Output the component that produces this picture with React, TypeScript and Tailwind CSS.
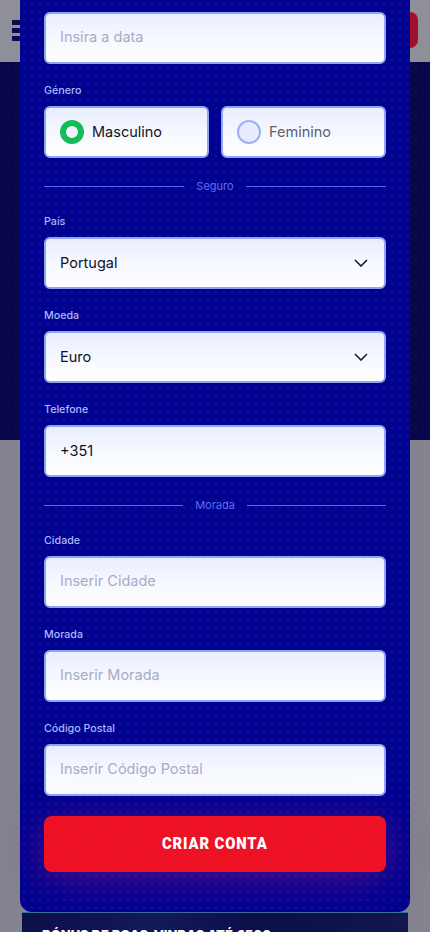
const font = "font-['Inter','Liberation_Sans',sans-serif]";
const inputBox =
  "flex h-[52px] w-full items-center rounded-md border-2 border-[#8ea4f5] bg-gradient-to-b from-[#e9eefe] via-[#f6f8ff] to-white px-[14px] text-[14.5px]";

function Label({ children }: { children: string }) {
  return <div className="mb-[7px] mt-[19px] h-4 text-[10.7px] font-medium leading-4 text-[#a9b7fb]">{children}</div>;
}

function Divider({ children }: { children: string }) {
  return (
    <div className="mb-px mt-5 flex h-4 items-center gap-3">
      <div className="h-px flex-1 bg-[#5a68f5]" />
      <span className="text-[11px] leading-4 text-[#5f6cf5]">{children}</span>
      <div className="h-px flex-1 bg-[#5a68f5]" />
    </div>
  );
}

function Placeholder({ children }: { children: string }) {
  return (
    <div className={inputBox}>
      <span className="-mt-[2px] text-[#a6acc6]">{children}</span>
    </div>
  );
}

function Select({ value }: { value: string }) {
  return (
    <div className={`${inputBox} justify-between`}>
      <span className="text-[#11131f]">{value}</span>
      <svg viewBox="0 0 14 8" className="mr-[2px] h-2 w-[14px]" fill="none" stroke="#1a1c2b" strokeWidth="1.6">
        <path d="M1 1l6 6 6-6" />
      </svg>
    </div>
  );
}

export default function App() {
  return (
    <div className={`relative h-[932px] w-[430px] overflow-hidden bg-[#83848f] ${font}`}>
      {/* page behind the dialog */}
      <div className="flex h-[62px] items-start justify-between bg-[#8f8f99] pl-3 pr-3 pt-3">
        <div className="mt-2 flex w-6 flex-col gap-[3px]">
          <div className="h-[5px] bg-[#0b0b4f]" />
          <div className="h-[5px] bg-[#0b0b4f]" />
          <div className="h-[5px] bg-[#0b0b4f]" />
        </div>
        <div className="h-9 w-20 rounded-lg bg-[#a20f2c]" />
      </div>
      <div className="h-[378px] bg-[#07074a] bg-[radial-gradient(#0a0a50_1px,transparent_1px)] bg-[length:6px_6px]" />
      <div className="mx-[22px] mt-[472px] h-5 overflow-hidden border-t border-[#3d6f98] bg-[linear-gradient(115deg,#0b0f4a_0%,#141a58_35%,#0b0f4a_60%,#12174f_100%)] px-5 pt-[12px] text-[13px] font-extrabold leading-5 text-white">
        BÓNUS DE BOAS-VINDAS ATÉ €500
      </div>

      {/* dialog */}
      <div className="absolute inset-x-5 top-0 flex h-[912px] flex-col rounded-b-xl bg-[#020290] bg-[radial-gradient(#0e1498_0.8px,transparent_1px),radial-gradient(#0a0f94_0.8px,transparent_1px)] bg-[length:8px_8px,11px_11px] px-6 pt-3">
        <Placeholder>Insira a data</Placeholder>

        <Label>Género</Label>
        <div className="grid grid-cols-2 gap-3">
          <div className={inputBox}>
            <span className="mr-2 h-6 w-6 rounded-full border-[6px] border-[#16bb5a] bg-[#eef1fe]" />
            <span className="text-[#11131f]">Masculino</span>
          </div>
          <div className={inputBox}>
            <span className="mr-2 h-6 w-6 rounded-full border-2 border-[#9db0f5] bg-[#e8edfe]" />
            <span className="text-[#5c5f70]">Feminino</span>
          </div>
        </div>

        <Divider>Seguro</Divider>
        <Label>País</Label>
        <Select value="Portugal" />
        <Label>Moeda</Label>
        <Select value="Euro" />
        <Label>Telefone</Label>
        <div className={inputBox}>
          <span className="text-[#11131f]">+351</span>
        </div>

        <Divider>Morada</Divider>
        <Label>Cidade</Label>
        <Placeholder>Inserir Cidade</Placeholder>
        <Label>Morada</Label>
        <Placeholder>Inserir Morada</Placeholder>
        <Label>Código Postal</Label>
        <Placeholder>Inserir Código Postal</Placeholder>

        <button className="mt-5 h-14 w-full shrink-0 rounded-lg bg-[#ee1022] bg-[repeating-linear-gradient(-12deg,#f5101f_0px,#f5101f_3px,#e8132a_3px,#e8132a_6px)] font-['Roboto',sans-serif] text-white shadow-[0_6px_36px_rgba(130,20,130,0.6)]">
          <span className="inline-block scale-x-[0.87] text-[17px] font-black tracking-[0.06em]">CRIAR CONTA</span>
        </button>
      </div>
    </div>
  );
}
